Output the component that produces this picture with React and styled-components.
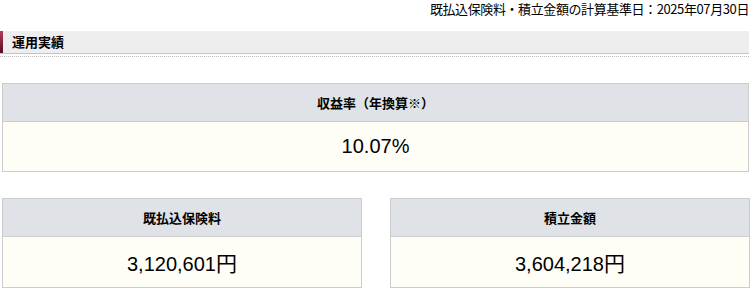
import React from 'react';
import styled, { createGlobalStyle } from 'styled-components';

const GlobalStyle = createGlobalStyle`
  body {
    margin: 0;
    background: #fff;
    font-family: "Liberation Sans", "Noto Sans CJK JP", sans-serif;
    color: #000;
  }
`;

const Page = styled.div`
  width: 750px;
  padding: 1px 1px 0 2px;
  box-sizing: border-box;
`;

const BaseDate = styled.div`
  text-align: right;
  font-family: "Noto Sans CJK JP", sans-serif;
  font-size: 13px;
  line-height: 16px;
  letter-spacing: -0.4px;
`;

const SectionTitle = styled.h2`
  margin: 14px 0 0 -2px;
  padding: 0 0 0 12px;
  height: 22px;
  line-height: 22px;
  font-family: "Noto Sans CJK JP", sans-serif;
  font-size: 13px;
  font-weight: bold;
  background: #eeeeee;
  border-bottom: 1px solid #c4c4c4;
  position: relative;

  &::before {
    content: "";
    position: absolute;
    left: 0;
    top: 0;
    bottom: 0;
    width: 3px;
    background: linear-gradient(#b23c5e, #5a0c22);
  }

  &::after {
    content: "";
    position: absolute;
    left: 0;
    right: 0;
    bottom: -4px;
    border-bottom: 1px dotted #bbbbbb;
  }
`;

const Card = styled.div`
  border: 1px solid #cccccc;
  box-sizing: border-box;
`;

const CardHead = styled.div`
  background: #dfe3e7;
  border-bottom: 1px solid #cccccc;
  height: 37px;
  line-height: 37px;
  text-align: center;
  font-family: "Noto Sans CJK JP", sans-serif;
  font-size: 13px;
  font-weight: bold;
`;

const CardValue = styled.div`
  background: #fffef6;
  height: ${(p) => p.$h}px;
  line-height: ${(p) => p.$h}px;
  text-align: center;
  font-size: 20px;
`;

const Yen = styled.span`
  font-family: "Noto Sans CJK JP", sans-serif;
  font-size: 21px;
`;

const TopCard = styled(Card)`
  margin-top: 29px;
`;

const Row = styled.div`
  display: grid;
  grid-template-columns: 360px 360px;
  column-gap: 28px;
  margin-top: 26px;
`;

const Stat = ({ label, children, h }) => (
  <Card>
    <CardHead>{label}</CardHead>
    <CardValue $h={h}>{children}</CardValue>
  </Card>
);

export default function App() {
  return (
    <>
      <GlobalStyle />
      <Page>
        <BaseDate>既払込保険料・積立金額の計算基準日：2025年07月30日</BaseDate>
        <SectionTitle>運用実績</SectionTitle>
        <TopCard>
          <CardHead>収益率（年換算※）</CardHead>
          <CardValue $h={49}>10.07%</CardValue>
        </TopCard>
        <Row>
          <Stat label="既払込保険料" h={50}>
            3,120,601<Yen>円</Yen>
          </Stat>
          <Stat label="積立金額" h={50}>
            3,604,218<Yen>円</Yen>
          </Stat>
        </Row>
      </Page>
    </>
  );
}
